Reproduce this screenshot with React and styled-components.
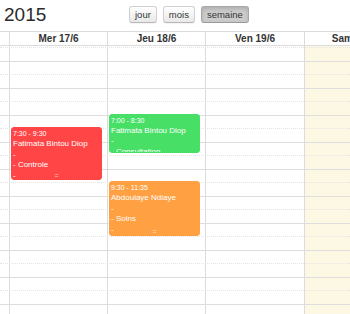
import React from "react";
import styled, { createGlobalStyle } from "styled-components";

const SLOT = 13.5; // height of one 30 minute slot
const START = 4 * 60 + 30; // first visible slot is 4:30

const GlobalStyle = createGlobalStyle`
  html, body {
    margin: 0;
    padding: 0;
    height: 314px;
    overflow: hidden;
    background: #fff;
  }
  body {
    font-family: "Liberation Sans", Arial, sans-serif;
    color: #333;
  }
`;

const days = [
  { label: "", partial: true },
  { label: "Mer 17/6" },
  { label: "Jeu 18/6" },
  { label: "Ven 19/6" },
  { label: "Sam 20/6", today: true },
];

const events = [
  {
    day: 1,
    start: "7:30",
    end: "9:30",
    color: "#ff4545",
    who: "Fatimata Bintou Diop",
    what: "Controle",
    resizable: true,
  },
  {
    day: 2,
    start: "7:00",
    end: "8:30",
    color: "#47df66",
    who: "Fatimata Bintou Diop",
    what: "Consultation",
  },
  {
    day: 2,
    start: "9:30",
    end: "11:35",
    color: "#ffa043",
    who: "Abdoulaye Ndiaye",
    what: "Soins",
    resizable: true,
  },
];

const toMinutes = (t) => {
  const [h, m] = t.split(":").map(Number);
  return h * 60 + m;
};

export default function App() {
  return (
    <Page>
      <GlobalStyle />
      <Toolbar>
        <Title>2015</Title>
        <ButtonGroup>
          <ViewButton>jour</ViewButton>
          <ViewButton>mois</ViewButton>
          <ViewButton active>semaine</ViewButton>
        </ButtonGroup>
      </Toolbar>

      <HeadRow>
        {days.map((d, i) => (
          <HeadCell key={i} first={i === 0}>
            {d.label}
          </HeadCell>
        ))}
      </HeadRow>

      <Body>
        <DayGrid>
          {days.map((d, i) => (
            <DayCol key={i} first={i === 0} today={d.today}>
              {events
                .filter((e) => e.day === i)
                .map((e, j) => {
                  const top = ((toMinutes(e.start) - START) / 30) * SLOT;
                  const height =
                    ((toMinutes(e.end) - toMinutes(e.start)) / 30) * SLOT - 1.5;
                  return (
                    <Event key={j} color={e.color} style={{ top, height }}>
                      <EventTime>
                        {e.start} - {e.end}
                      </EventTime>
                      <EventLine>{e.who}</EventLine>
                      <EventLine>-</EventLine>
                      <EventLine>- {e.what}</EventLine>
                      <EventLine>-</EventLine>
                      {e.resizable && <Resizer>=</Resizer>}
                    </Event>
                  );
                })}
            </DayCol>
          ))}
        </DayGrid>
        <Slats>
          {Array.from({ length: 21 }).map((_, i) => (
            <SlotRow key={i} minor={i % 2 === 0} />
          ))}
        </Slats>
      </Body>
    </Page>
  );
}

const Page = styled.div`
  width: 350px;
  height: 314px;
  overflow: hidden;
`;

const Toolbar = styled.div`
  display: grid;
  grid-template-columns: 129px auto;
  align-items: start;
  height: 31px;
  padding-top: 5px;
  box-sizing: border-box;
`;

const Title = styled.h2`
  margin: 0 0 0 4px;
  font-size: 19px;
  line-height: 19px;
  font-weight: normal;
  color: #2b2b2b;
`;

const ButtonGroup = styled.div`
  display: flex;
  gap: 6px;
  margin-top: 1px;
`;

const ViewButton = styled.button`
  height: 17px;
  padding: 0 5px;
  font-family: "Liberation Sans", Arial, sans-serif;
  font-size: 9.5px;
  color: #333;
  border: 1px solid ${(p) => (p.active ? "#a8a8a8" : "#d0d0d0")};
  border-bottom-color: ${(p) => (p.active ? "#9a9a9a" : "#b8b8b8")};
  border-radius: 3px;
  background: ${(p) =>
    p.active
      ? "#cccccc"
      : "linear-gradient(to bottom, #ffffff, #e8e8e8)"};
  box-shadow: ${(p) =>
    p.active
      ? "inset 0 2px 4px rgba(0,0,0,0.15)"
      : "0 1px 1px rgba(0,0,0,0.05)"};
`;

const columns = "9px 98px 98px 99px 98px";

const HeadRow = styled.div`
  display: grid;
  grid-template-columns: ${columns};
  width: 402px;
  border-top: 1px solid #dcdcdc;
  border-bottom: 1px solid #dcdcdc;
  height: 15px;
  box-sizing: border-box;
`;

const HeadCell = styled.div`
  border-left: ${(p) => (p.first ? "none" : "1px solid #dcdcdc")};
  font-size: 10px;
  font-weight: bold;
  line-height: 13px;
  text-align: center;
  color: #333;
  white-space: nowrap;
  overflow: hidden;
`;

const Body = styled.div`
  position: relative;
  width: 402px;
  height: 268px;
`;

const DayGrid = styled.div`
  display: grid;
  grid-template-columns: ${columns};
  height: 100%;
`;

const DayCol = styled.div`
  position: relative;
  border-left: ${(p) => (p.first ? "none" : "1px solid #dcdcdc")};
  background: ${(p) => (p.today ? "#fcf8e3" : "transparent")};
`;

const Slats = styled.div`
  position: absolute;
  top: 1px;
  left: 0;
  right: 0;
  pointer-events: none;
  z-index: 1;
`;

const SlotRow = styled.div`
  height: ${SLOT}px;
  box-sizing: border-box;
  border-top: 1px ${(p) => (p.minor ? "dotted #e4e4e4" : "solid #dedede")};
`;

const Event = styled.div`
  position: absolute;
  left: 1px;
  right: 5px;
  z-index: 2;
  box-sizing: border-box;
  padding: 1px 1px 0;
  background: ${(p) => p.color};
  border: 1px solid ${(p) => p.color};
  border-radius: 3px;
  color: #fff;
  overflow: hidden;
`;

const EventTime = styled.div`
  font-size: 7px;
  line-height: 10px;
  white-space: nowrap;
`;

const EventLine = styled.div`
  font-size: 8px;
  line-height: 10.5px;
  white-space: nowrap;
`;

const Resizer = styled.div`
  position: absolute;
  left: 0;
  right: 0;
  bottom: 0;
  height: 5px;
  line-height: 5px;
  font-size: 7px;
  font-family: "Liberation Mono", monospace;
  text-align: center;
  color: rgba(255, 255, 255, 0.7);
  overflow: hidden;
`;
